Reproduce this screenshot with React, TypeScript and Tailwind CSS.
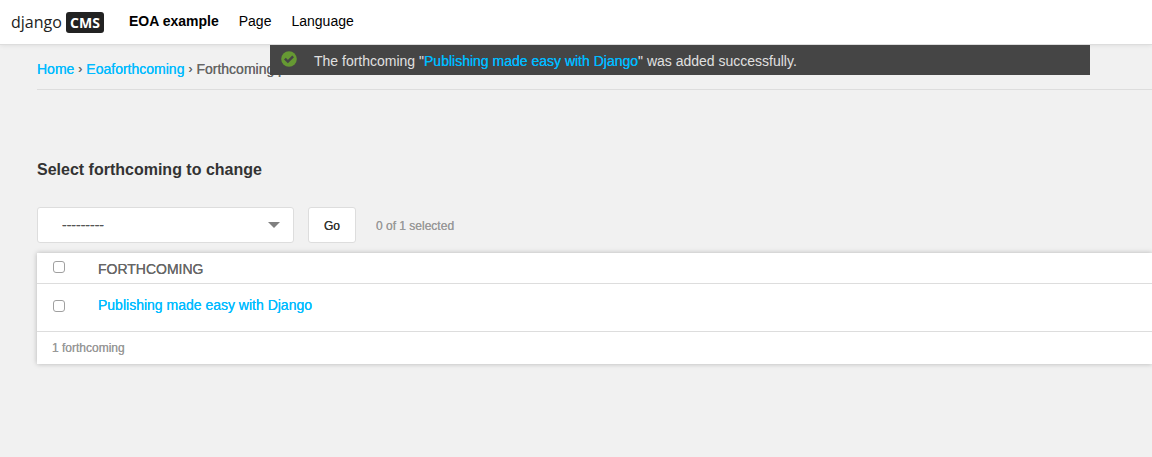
import React from 'react';

const checkboxClass =
  'block size-3 appearance-none rounded-[3px] border border-[#a0a0a0] bg-white checked:bg-[#00bbff]';

function Toolbar() {
  return (
    <header className="relative flex h-[45px] items-center border-b border-[#dddddd] bg-white pl-[11px] shadow-[0_0_5px_rgba(0,0,0,0.1)] [text-shadow:none]">
      <a
        href="#home"
        aria-label="django CMS"
        className="flex items-center font-['Open_Sans',sans-serif] text-[#222222]"
      >
        <span className="w-[55px] text-[16px] leading-5">django</span>
        <span className="flex h-[21px] w-[38px] items-center justify-center rounded-[3px] bg-[#222222] text-[14px] font-bold text-white">
          CMS
        </span>
      </a>
      <nav className="ml-[25px] flex gap-5 pb-0.5 text-[14px] leading-5 text-black">
        <a href="#site" className="font-bold">EOA example</a>
        <a href="#page">Page</a>
        <a href="#language">Language</a>
      </nav>
    </header>
  );
}

function Message() {
  return (
    <div
      role="status"
      className="absolute top-[45px] right-[62px] left-[270px] flex h-[30px] items-center bg-[#454545] pl-[11px] text-[14px] leading-5 text-[#e0e0e0] [text-shadow:none]"
    >
      <svg viewBox="0 0 16 16" className="mr-[17px] mb-0.5 size-4" aria-hidden="true">
        <circle cx="8" cy="8" r="7.8" fill="#693" />
        <path d="M3.9 7.6 6.9 10.6 12.1 5.4" fill="none" stroke="#454545" strokeWidth="2.5" />
      </svg>
      <p className="pt-0.5">
        The forthcoming &quot;
        <a href="#entry" className="text-[#00bbff] [text-shadow:0_0_0_currentColor]">Publishing made easy with Django</a>
        &quot; was added successfully.
      </p>
    </div>
  );
}

export default function App() {
  return (
    <div className="relative min-h-screen overflow-x-hidden bg-[#f1f1f1] font-['Liberation_Sans',Arial,sans-serif] text-[14px] text-[#666666] [text-shadow:0_0_0_currentColor]">
      <Toolbar />
      <Message />
      <main className="pl-[37px]">
        <nav aria-label="Breadcrumb" className="flex h-[45px] items-center gap-1 border-b border-[#dddddd] pt-1 leading-5">
          <a href="#home" className="text-[#00bbff]">Home</a>
          <span className="text-[12px]">›</span>
          <a href="#app" className="text-[#00bbff]">Eoaforthcoming</a>
          <span className="text-[12px]">›</span>
          <span>Forthcoming p</span>
        </nav>

        <h1 className="pt-[70px] text-[16px] leading-5 font-bold text-[#333333] [text-shadow:none]">
          Select forthcoming to change
        </h1>

        <form onSubmit={(e) => e.preventDefault()}>
          <div className="flex items-center pt-[27px]">
            <div className="relative">
              <select
                aria-label="Action"
                className="block h-9 w-[257px] appearance-none rounded-[3px] border border-[#dddddd] bg-white pr-8 pl-6 text-[14px] text-[#555555] [text-shadow:0_0_0_currentColor]"
              >
                <option>---------</option>
              </select>
              <svg
                viewBox="0 0 12 6"
                className="pointer-events-none absolute top-[15px] right-3.5 h-1.5 w-3"
                aria-hidden="true"
              >
                <path d="M0 0h12L6 6z" fill="#808080" />
              </svg>
            </div>
            <button
              type="submit"
              className="ml-3.5 h-9 w-12 rounded-[3px] border border-[#dddddd] bg-white pt-0.5 text-[12px] text-[#333333] [text-shadow:0_0_0_currentColor]"
            >
              Go
            </button>
            <span className="ml-5 pt-0.5 text-[12px] text-[#999999]">0 of 1 selected</span>
          </div>

          <div className="mt-2.5 bg-white shadow-[0_0_5px_rgba(0,0,0,0.25)]">
            <table className="w-full border-separate border-spacing-0 text-left">
              <thead>
                <tr className="h-[31px]">
                  <th className="w-[61px] border-b border-[#dddddd] p-0 pb-0.5 pl-4">
                    <input type="checkbox" aria-label="Select all" className={checkboxClass} />
                  </th>
                  <th className="border-b border-[#dddddd] p-0 pt-0.5 font-normal">FORTHCOMING</th>
                </tr>
              </thead>
              <tbody>
                <tr className="h-12">
                  <td className="border-b border-[#dddddd] p-0 pb-1 pl-4">
                    <input
                      type="checkbox"
                      aria-label="Select Publishing made easy with Django"
                      className={checkboxClass}
                    />
                  </td>
                  <td className="border-b border-[#dddddd] p-0 pb-1">
                    <a href="#entry" className="text-[#00bbff]">Publishing made easy with Django</a>
                  </td>
                </tr>
              </tbody>
            </table>
            <p className="px-[15px] pt-2 pb-2 text-[12px] leading-4 text-[#999999]">1 forthcoming</p>
          </div>
        </form>
      </main>
    </div>
  );
}
